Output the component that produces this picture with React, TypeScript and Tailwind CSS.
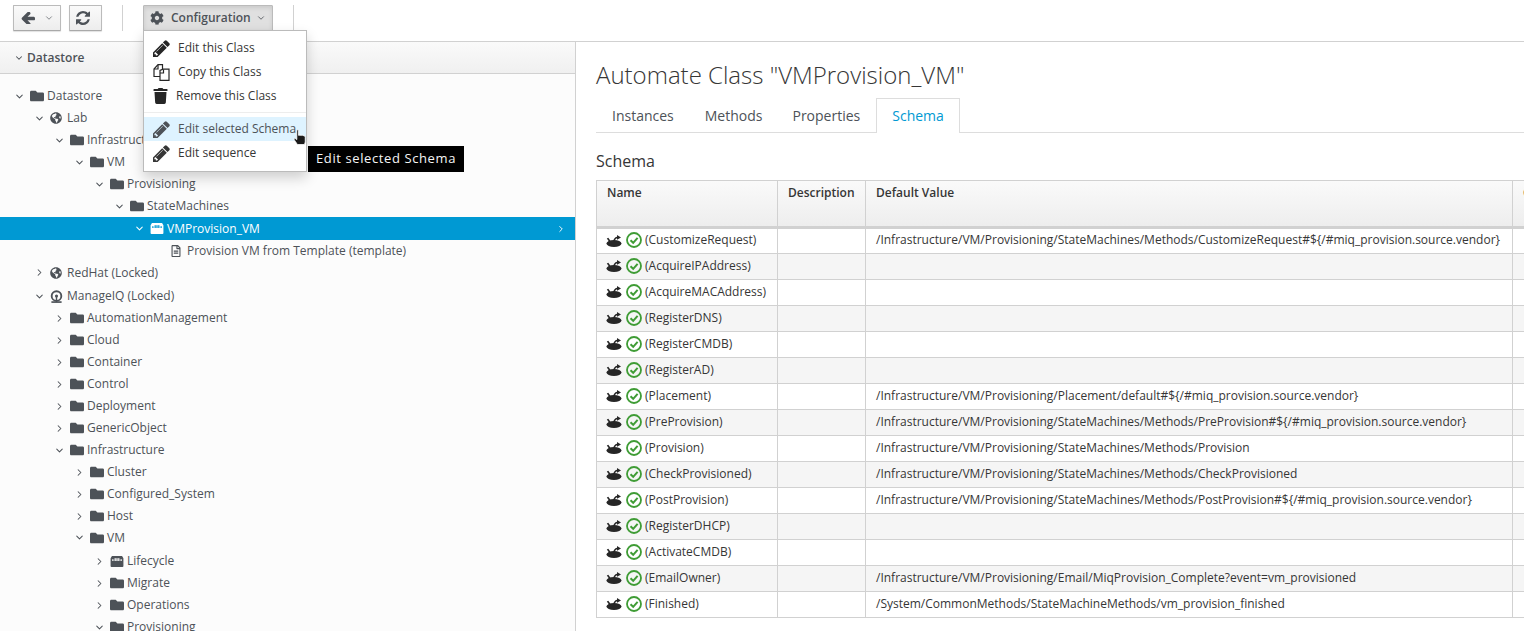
import React from "react";
import { FaCog, FaTrash, FaFolder, FaGlobeAmericas, FaRegFileAlt } from "react-icons/fa";
import { FiChevronDown, FiChevronRight } from "react-icons/fi";

const Arrow = ({ className = "" }: { className?: string }) => (
  <svg viewBox="128 256 1536 1280" className={className} fill="currentColor">
    <path d="M1664 896v128q0 53-32.500 90.500t-84.500 37.500h-704l293 294q38 36 38 90t-38 90l-75 76q-38 38-91 38-52 0-90-38l-651-652q-37-37-37-90 0-52 37-91l651-650q38-39 90-39 52 0 90 39l75 74q38 38 38 90t-38 90l-293 293h704q52 0 84.500 37.500t32.500 90.500z" />
  </svg>
);

const Refresh = ({ className = "" }: { className?: string }) => (
  <svg viewBox="0 0 1536 1536" className={className} fill="currentColor">
    <path d="M1511 928q0 5-1 7-64 268-268 434.500t-478 166.500q-146 0-282.500-55t-243.500-157l-129 129q-19 19-45 19t-45-19-19-45v-448q0-26 19-45t45-19h448q26 0 45 19t19 45-19 45l-137 137q71 66 161 102t187 36q134 0 250-65t186-179q11-17 53-117 8-23 30-23h192q13 0 22.500 9.500t9.500 22.500zm25-800v448q0 26-19 45t-45 19h-448q-26 0-45-19t-19-45 19-45l138-138q-148-137-349-137-134 0-250 65t-186 179q-11 17-53 117-8 23-30 23h-199q-13 0-22.500-9.500t-9.500-22.500v-7q65-268 270-434.500t480-166.500q146 0 284 55.500t245 156.500l130-129q19-19 45-19t45 19 19 45z" />
  </svg>
);

const Pencil = ({ className = "" }: { className?: string }) => (
  <svg viewBox="128 128 1536 1536" className={className} fill="currentColor">
    <path d="M491 1536l91-91-235-235-91 91v107h128v128h107zm523-928q0-22-22-22-10 0-17 7l-542 542q-7 7-7 17 0 22 22 22 10 0 17-7l542-542q7-7 7-17zm-54-192l416 416-832 832h-416v-416zm683 96q0 53-37 90l-166 166-416-416 166-165q36-38 90-38 53 0 91 38l235 234q37 39 37 91z" />
  </svg>
);

const ClassIcon = ({ className = "" }: { className?: string }) => (
  <svg viewBox="0 0 14 12" className={className} fill="currentColor">
    <path
      fillRule="evenodd"
      d="M1.500 0H12.500L14 2.500V11a1 1 0 0 1-1 1H1a1 1 0 0 1-1-1V2.500ZM1.800 5.500V4a.7.7 0 0 1 1.400 0V5.500ZM4.300 5.500V3a.7.7 0 0 1 1.400 0V5.500ZM6.300 5.500V3a.7.7 0 0 1 1.400 0V5.500ZM8.300 5.500V3a.7.7 0 0 1 1.400 0V5.500ZM10.800 5.500V4a.7.7 0 0 1 1.400 0V5.500Z"
    />
  </svg>
);

const MiqIcon = ({ className = "" }: { className?: string }) => (
  <svg viewBox="0 0 14 14" className={className} fill="none" stroke="currentColor" strokeWidth="2">
    <circle cx="7" cy="6.500" r="5.200" />
    <circle cx="7" cy="6.500" r="1.700" fill="currentColor" stroke="none" />
    <path d="M1.500 13H12.500" strokeWidth="1.800" />
    <path d="M7 7.500V13" strokeWidth="1.500" />
  </svg>
);

const CopyIcon = ({ className = "" }: { className?: string }) => (
  <svg viewBox="0 0 17 17" className={className} fill="none" stroke="currentColor" strokeWidth="1.200">
    <path d="M7 12.500H1V5l4-4.300h4.500V5" />
    <path d="M5 1v4H1" />
    <path d="M7 16.400V6.500l3-1.300h6v11.200z" fill="white" />
    <path d="M10.500 5.500v3.500H7" />
  </svg>
);

const StateIcon = () => (
  <svg viewBox="0 0 16 13" className="mr-[4px] h-[13px] w-[16px] shrink-0 text-[#262626]" fill="currentColor">
    <ellipse cx="8" cy="9.500" rx="7.500" ry="3.500" />
    <path d="M0.800 4.500 2.300 3.800 5 7.500 3.500 8.200Z" />
    <path d="M7 8C7.300 5 8.800 3.200 11 2.800V1L15 3.400 11 5.800V4.300C9.800 4.700 8.800 6 8.500 8Z" />
  </svg>
);

const CheckIcon = () => (
  <svg viewBox="0 0 16 16" className="mr-[3px] h-[16px] w-[16px] shrink-0" fill="none" stroke="#3f9c35" strokeWidth="1.800">
    <circle cx="8" cy="8" r="7" />
    <path d="M4.500 8.200 7.200 10.800 11.600 5.800" strokeWidth="2" />
  </svg>
);

type Kind = "folder" | "globe" | "class" | "miq" | "file";
type Node = { d: number; t: string; k: Kind; c?: "open" | "closed"; sel?: boolean; tall?: boolean };

const tree: Node[] = [
  { d: 0, t: "Datastore", k: "folder", c: "open" },
  { d: 1, t: "Lab", k: "globe", c: "open" },
  { d: 2, t: "Infrastructure", k: "folder", c: "open" },
  { d: 3, t: "VM", k: "folder", c: "open" },
  { d: 4, t: "Provisioning", k: "folder", c: "open" },
  { d: 5, t: "StateMachines", k: "folder", c: "open" },
  { d: 6, t: "VMProvision_VM", k: "class", c: "open", sel: true, tall: true },
  { d: 7, t: "Provision VM from Template (template)", k: "file" },
  { d: 1, t: "RedHat (Locked)", k: "globe", c: "closed", tall: true },
  { d: 1, t: "ManageIQ (Locked)", k: "miq", c: "open" },
  { d: 2, t: "AutomationManagement", k: "folder", c: "closed" },
  { d: 2, t: "Cloud", k: "folder", c: "closed" },
  { d: 2, t: "Container", k: "folder", c: "closed" },
  { d: 2, t: "Control", k: "folder", c: "closed" },
  { d: 2, t: "Deployment", k: "folder", c: "closed" },
  { d: 2, t: "GenericObject", k: "folder", c: "closed" },
  { d: 2, t: "Infrastructure", k: "folder", c: "open" },
  { d: 3, t: "Cluster", k: "folder", c: "closed" },
  { d: 3, t: "Configured_System", k: "folder", c: "closed" },
  { d: 3, t: "Host", k: "folder", c: "closed" },
  { d: 3, t: "VM", k: "folder", c: "open", tall: true },
  { d: 4, t: "Lifecycle", k: "class", c: "closed" },
  { d: 4, t: "Migrate", k: "folder", c: "closed" },
  { d: 4, t: "Operations", k: "folder", c: "closed" },
  { d: 4, t: "Provisioning", k: "folder", c: "open" },
];

const P = "/Infrastructure/VM/Provisioning/";
const M = P + "StateMachines/Methods/";
const V = "#${/#miq_provision.source.vendor}";
const rows: [string, string][] = [
  ["(CustomizeRequest)", M + "CustomizeRequest" + V],
  ["(AcquireIPAddress)", ""],
  ["(AcquireMACAddress)", ""],
  ["(RegisterDNS)", ""],
  ["(RegisterCMDB)", ""],
  ["(RegisterAD)", ""],
  ["(Placement)", P + "Placement/default" + V],
  ["(PreProvision)", M + "PreProvision" + V],
  ["(Provision)", M + "Provision"],
  ["(CheckProvisioned)", M + "CheckProvisioned"],
  ["(PostProvision)", M + "PostProvision" + V],
  ["(RegisterDHCP)", ""],
  ["(ActivateCMDB)", ""],
  ["(EmailOwner)", P + "Email/MiqProvision_Complete?event=vm_provisioned"],
  ["(Finished)", "/System/CommonMethods/StateMachineMethods/vm_provision_finished"],
];

function TreeIcon({ k }: { k: Kind }) {
  if (k === "folder") return <FaFolder className="h-[14px] w-[14px] shrink-0" />;
  if (k === "globe") return <FaGlobeAmericas className="h-[12px] w-[12px] shrink-0" />;
  if (k === "class") return <ClassIcon className="h-[11px] w-[14px] shrink-0" />;
  if (k === "miq") return <MiqIcon className="h-[13px] w-[13px] shrink-0" />;
  return <FaRegFileAlt className="h-[12px] w-[12px] shrink-0" />;
}

function TreeRow({ n }: { n: Node }) {
  return (
    <div
      className={`flex items-center pr-[9px] ${n.tall ? "h-[23px]" : "h-[22px]"} ${n.tall && !n.sel ? "pb-[2px]" : ""} ${n.sel ? "bg-[#0099d3] text-white" : "text-[#4d5258]"}`}
      style={{ paddingLeft: 14 + n.d * 20 }}
    >
      <span className="flex w-[16px] shrink-0 items-center">
        {n.c === "open" && <FiChevronDown className="h-[11px] w-[11px]" strokeWidth={2.2} />}
        {n.c === "closed" && <FiChevronRight className="h-[11px] w-[11px]" strokeWidth={2.2} />}
      </span>
      <span className="flex w-[17px] shrink-0 items-center"><TreeIcon k={n.k} /></span>
      <span className="flex-1 whitespace-nowrap">{n.t}</span>
      {n.sel && <FiChevronRight className="h-[10px] w-[10px]" strokeWidth={2.2} />}
    </div>
  );
}

function MenuItem({ icon, label, active, gap = "w-[25px]" }: { icon: React.ReactNode; label: string; active?: boolean; gap?: string }) {
  return (
    <div className={`flex h-[24px] items-center pl-[9px] text-[12px] ${active ? "bg-[#def3ff] text-[#4d5258]" : "text-[#363636]"}`}>
      <span className={`flex shrink-0 items-center ${gap}`}>{icon}</span>
      <span className="whitespace-nowrap">{label}</span>
    </div>
  );
}

const btn = "flex h-[26px] items-center rounded-[1px] border border-[#bbbbbb] border-b-[#a9a9a9] bg-linear-to-b from-[#fafafa] to-[#ededed] text-[#4d5258] shadow-[0_1px_1px_rgba(0,0,0,0.12)]";

export default function App() {
  return (
    <div className="relative flex h-[631px] w-[1524px] flex-col overflow-hidden bg-white font-['Open_Sans',sans-serif] text-[12px] text-[#363636]">
      {/* toolbar */}
      <div className="flex h-[42px] shrink-0 items-start border-b border-[#d1d1d1] bg-white pt-[5px] pl-[13px]">
        <div className={`${btn} w-[48px] gap-[9px] pl-[7px]`}>
          <Arrow className="h-[12px] w-[14px]" />
          <FiChevronDown className="h-[10px] w-[10px]" strokeWidth={1.6} />
        </div>
        <div className={`${btn} ml-[8px] w-[33px] pl-[6px]`}>
          <Refresh className="h-[14px] w-[14px]" />
        </div>
        <div className="ml-[20px] h-[26px] w-px bg-[#d1d1d1]" />
        <div className="ml-[20px] flex h-[26px] w-[130px] items-center rounded-[1px] border border-[#bbbbbb] bg-[#e0e0e0] pl-[6px] text-[#4d5258] shadow-[inset_0_2px_4px_rgba(0,0,0,0.1)]">
          <FaCog className="h-[14px] w-[14px]" />
          <span className="ml-[7px] font-semibold">Configuration</span>
          <FiChevronDown className="ml-[5px] h-[10px] w-[10px]" strokeWidth={2} />
        </div>
        <div className="ml-[20px] h-[26px] w-px bg-[#d1d1d1]" />
      </div>

      <div className="flex min-h-0 flex-1">
        {/* left panel */}
        <div className="flex w-[576px] shrink-0 flex-col border-r border-[#d1d1d1] bg-[#fcfcfc]">
          <div className="flex h-[32px] shrink-0 items-center gap-[3px] border-b border-[#d1d1d1] bg-linear-to-b from-[#fafafa] to-[#f0f0f0] pl-[14px] font-semibold text-[#4d5258]">
            <FiChevronDown className="h-[10px] w-[10px]" strokeWidth={2.5} />
            <span>Datastore</span>
          </div>
          <div className="overflow-hidden pt-[11px]">
            {tree.map((n, i) => (
              <TreeRow key={i} n={n} />
            ))}
          </div>
        </div>

        {/* right panel */}
        <div className="min-w-0 flex-1 overflow-hidden pl-[20px]">
          <h1 className="mt-[17px] text-[24px] leading-[32px] font-light whitespace-nowrap text-[#363636]">Automate Class "VMProvision_VM"</h1>
          <div className="mt-[7px] flex h-[35px] items-end border-b border-[#dddddd] text-[14px] text-[#4d5258]">
            <div className="flex h-[33px] items-center px-[16px]">Instances</div>
            <div className="flex h-[33px] items-center px-[15px]">Methods</div>
            <div className="flex h-[33px] items-center pr-[16px] pl-[15px]">Properties</div>
            <div className="relative -mb-px flex h-[35px] items-center border border-b-0 border-[#dddddd] bg-white px-[15px] pb-[2px] text-[#0099d3]">Schema</div>
          </div>
          <h2 className="mt-[16px] text-[16px] leading-[24px] font-normal text-[#363636]">Schema</h2>
          <table className="mt-[7px] w-[1000px] table-fixed border-collapse">
            <colgroup>
              <col className="w-[181px]" />
              <col className="w-[88px]" />
              <col className="w-[647px]" />
              <col className="w-[84px]" />
            </colgroup>
            <thead>
              <tr className="h-[47px] bg-linear-to-b from-[#fafafa] to-[#ededed] text-left align-top">
                <th className="border border-b-[3px] border-[#d1d1d1] px-[10px] pt-[3px] font-semibold">Name</th>
                <th className="border border-b-[3px] border-[#d1d1d1] px-[10px] pt-[3px] font-semibold whitespace-nowrap">Description</th>
                <th className="border border-b-[3px] border-[#d1d1d1] px-[10px] pt-[3px] font-semibold">Default Value</th>
                <th className="border border-b-[3px] border-[#d1d1d1] px-[10px] pt-[3px] font-semibold whitespace-nowrap">Collect</th>
              </tr>
            </thead>
            <tbody>
              {rows.map(([name, val], i) => (
                <tr key={name} className={`h-[26px] ${i % 2 === 1 ? "bg-[#f5f5f5]" : "bg-white"}`}>
                  <td className="border border-[#d1d1d1] pr-[9px] pb-[2px] pl-[9px]">
                    <div className="flex items-center whitespace-nowrap">
                      <StateIcon />
                      <CheckIcon />
                      <span>{name}</span>
                    </div>
                  </td>
                  <td className="border border-[#d1d1d1]" />
                  <td className="border border-[#d1d1d1] px-[10px] pb-[2px] whitespace-nowrap">{val}</td>
                  <td className="border border-[#d1d1d1]" />
                </tr>
              ))}
            </tbody>
          </table>
        </div>
      </div>

      {/* dropdown menu */}
      <div className="absolute top-[30px] left-[143px] w-[164px] border border-[#bbbbbb] bg-white pt-[5px] pb-[6px] shadow-[0_6px_12px_rgba(0,0,0,0.18)]">
        <MenuItem icon={<Pencil className="h-[17px] w-[17px] text-[#262626]" />} label="Edit this Class" />
        <MenuItem icon={<CopyIcon className="h-[17px] w-[17px] text-[#262626]" />} label="Copy this Class" />
        <MenuItem icon={<FaTrash className="h-[16px] w-[15px] text-[#262626]" />} label="Remove this Class" gap="w-[23px]" />
        <div className="my-[4px] h-px bg-[#ededed]" />
        <MenuItem active icon={<Pencil className="h-[17px] w-[17px] text-[#4d5258]" />} label="Edit selected Schema" />
        <MenuItem icon={<Pencil className="h-[17px] w-[17px] text-[#363636]" />} label="Edit sequence" />
      </div>

      {/* tooltip */}
      <div className="absolute top-[146px] left-[308px] flex h-[26px] w-[156px] items-center justify-center bg-black text-[13px] tracking-[0.6px] whitespace-nowrap text-[#f5f5f5]">
        Edit selected Schema
      </div>

      {/* hand cursor */}
      <svg viewBox="0 0 14 17" className="absolute top-[129px] left-[293px] h-[18px] w-[15px]">
        <path d="M3.500 1.500c0-1 1.700-1 1.700 0V6l.9-.2.1.2 1.300-.2.200.2 1.200-.1.300.3 1.100.1c.8.300 1.200.7 1.200 1.400v4.500c0 1-.5 1.500-1 2.500H4c-.7-1.500-2.500-3.500-3-4.800-.3-.9.600-1.400 1.300-.8L3.500 10z" fill="#1a1a1a" stroke="white" strokeWidth="0.800" />
      </svg>
    </div>
  );
}
